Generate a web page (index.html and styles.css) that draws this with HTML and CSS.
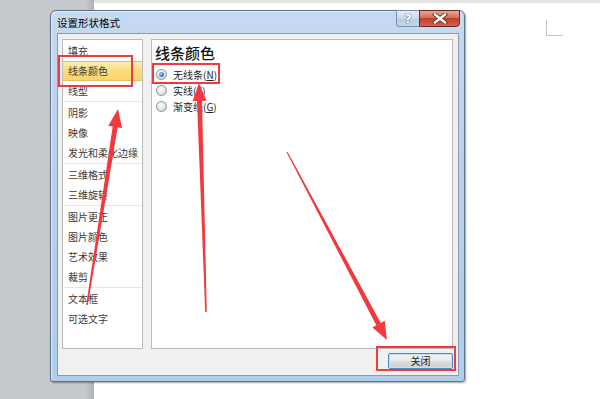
FILE: index.html
```html
<!DOCTYPE html>
<html lang="zh-CN">
<head>
    <meta charset="UTF-8">
    <title>设置形状格式</title>
    <link rel="stylesheet" href="styles.css">
</head>
<body>
    <div class="desk"></div>
    <div class="page">
        <div class="crop-mark"></div>
    </div>

    <div class="dialog">
        <div class="titlebar">
            <span class="title">设置形状格式</span>
            <div class="caption-buttons">
                <div class="btn-help">?</div>
                <div class="btn-close">
                    <svg width="16" height="11" viewBox="0 0 16 11">
                        <path d="M3 1.5 L13 9.5 M13 1.5 L3 9.5" stroke="#6e2a20" stroke-width="4.2" stroke-linecap="square"/>
                        <path d="M3 1.5 L13 9.5 M13 1.5 L3 9.5" stroke="#ffffff" stroke-width="2.4" stroke-linecap="square"/>
                    </svg>
                </div>
            </div>
        </div>

        <div class="client">
            <div class="panes">
                <ul class="nav">
                    <li>填充</li>
                    <li class="active">线条颜色</li>
                    <li>线型</li>
                    <li class="sep"></li>
                    <li>阴影</li>
                    <li>映像</li>
                    <li>发光和柔化边缘</li>
                    <li class="sep"></li>
                    <li>三维格式</li>
                    <li>三维旋转</li>
                    <li class="sep"></li>
                    <li>图片更正</li>
                    <li>图片颜色</li>
                    <li>艺术效果</li>
                    <li>裁剪</li>
                    <li class="sep"></li>
                    <li>文本框</li>
                    <li>可选文字</li>
                </ul>

                <div class="panel">
                    <h2>线条颜色</h2>
                    <label class="radio checked"><span class="dot"></span>无线条(<u>N</u>)</label>
                    <label class="radio"><span class="dot"></span>实线(<u>S</u>)</label>
                    <label class="radio"><span class="dot"></span>渐变线(<u>G</u>)</label>
                </div>
            </div>
            <div class="actions">
                <button class="close-btn">关闭</button>
            </div>
        </div>
    </div>

    <!-- red annotations drawn over the screenshot -->
    <svg class="marks" width="600" height="399" viewBox="0 0 600 399">
        <g fill="none" stroke="#f03a3e" stroke-width="2">
            <rect x="59" y="56" width="73" height="30"/>
            <rect x="153" y="64" width="66" height="19"/>
            <rect x="377" y="347" width="78" height="23"/>
        </g>
        <g fill="#f23a3d">
            <polygon points="118,109 122.1,127.9 117.7,127.2 87.8,305.1 86.2,304.9 112.7,126.4 108.3,125.7"/>
            <polygon points="199,83 206.5,100.8 202,100.9 206.8,312 205.2,312 197,101.1 192.6,101.2"/>
            <polygon points="387,340 384.7,320.8 380.8,322.9 287.5,151.7 286.5,152.3 376.3,325.3 372.4,327.4"/>
        </g>
    </svg>
</body>
</html>
```

FILE: styles.css
```css
body {
    margin: 0;
    width: 600px;
    height: 399px;
    overflow: hidden;
    position: relative;
    display: flex;
    background-color: #ffffff;
    font-family: "Noto Sans CJK SC", "Noto Sans", sans-serif;
    font-size: 10px;
    color: #333333;
}
.desk {
    width: 94px;
    background: linear-gradient(to right, #c5c8cc 86px, #aeb1b5 94px);
}
.page {
    flex: 1;
    border-top: 3px solid #e4e4e4;
    padding: 17px 0 0 452px;
}
.crop-mark {
    width: 16px;
    height: 15px;
    border-left: 1px solid #c4c4c4;
    border-bottom: 1px solid #c4c4c4;
}

.dialog {
    position: absolute;
    left: 50px;
    top: 10px;
    width: 415px;
    height: 372px;
    box-sizing: border-box;
    border: 1px solid #5f7189;
    border-radius: 6px 6px 3px 3px;
    padding: 0 5px 5px 6px;
    display: flex;
    flex-direction: column;
    background: linear-gradient(#c6daf0, #bad3ee 30%, #b0cdec 100%);
    box-shadow: inset 1px 1px 0 #dfeaf7, 1px 1px 2px rgba(0, 0, 0, 0.35);
}
.titlebar {
    height: 22px;
    display: flex;
    align-items: center;
    justify-content: space-between;
}
.title {
    color: #000000;
    font-size: 10.5px;
    line-height: 14px;
    margin-top: 1px;
}
.caption-buttons {
    align-self: flex-start;
    display: flex;
    margin-top: -1px;
    margin-right: -1px;
}
.btn-help {
    width: 22px;
    height: 15px;
    border: 1px solid #7a8fa8;
    border-right: none;
    border-radius: 0 0 0 4px;
    background: linear-gradient(#e4ecf5, #cbd9e9 50%, #b6c9de 51%, #c6d6e8);
    color: #ffffff;
    font-family: "DejaVu Sans", sans-serif;
    font-weight: bold;
    font-size: 13px;
    line-height: 15px;
    text-align: center;
    text-shadow: 0 0 1px #4c5a6c, 0 0 1px #4c5a6c;
}
.btn-close {
    width: 39px;
    height: 15px;
    border: 1px solid #6b2b24;
    border-radius: 0 0 4px 0;
    background: linear-gradient(#e8a595, #d66d5a 45%, #c23d2b 50%, #d1624f);
    display: flex;
    align-items: center;
    justify-content: center;
}

.client {
    flex: 1;
    border: 1px solid #8a9aaf;
    background-color: #f0f0f0;
    padding: 5px 5px 0 4px;
    display: flex;
    flex-direction: column;
}
.panes {
    height: 310px;
    display: flex;
    gap: 8px;
}
.nav {
    width: 79px;
    margin: 0;
    padding: 1px 0 0 0;
    list-style: none;
    background-color: #ffffff;
    border: 1px solid #bcbcbc;
}
.nav li {
    height: 20px;
    line-height: 20px;
    padding-left: 5px;
    white-space: nowrap;
    color: #3a3a3a;
}
.nav li.active {
    height: 18px;
    line-height: 18px;
    border-top: 1px solid #e3c162;
    border-bottom: 1px solid #e3c162;
    background: linear-gradient(#fdeeb5, #fbdc7c 50%, #fad470);
}
.nav li.sep {
    height: 1px;
    margin: 0 0 1px 0;
    padding: 0;
    background-color: #e6e6e6;
}
.panel {
    flex: 1;
    background-color: #ffffff;
    border: 1px solid #bcbcbc;
    padding: 3px 3px 0 3px;
}
.panel h2 {
    margin: 0 0 3px 0;
    font-size: 15px;
    line-height: 20px;
    font-weight: 500;
    color: #111111;
}
.radio {
    display: flex;
    align-items: center;
    height: 16px;
    color: #222222;
}
.radio u {
    text-underline-offset: 1px;
}
.dot {
    width: 9px;
    height: 9px;
    margin: 0 6px 0 1px;
    border: 1px solid #8c8f93;
    border-radius: 50%;
    background: radial-gradient(circle at 40% 35%, #ffffff, #dcdcdc 70%, #c8c8c8);
    display: flex;
    align-items: center;
    justify-content: center;
}
.radio.checked .dot::after {
    content: "";
    width: 5px;
    height: 5px;
    border-radius: 50%;
    background: radial-gradient(circle at 35% 35%, #8ed0f7, #2f7fc4 60%, #1b4f86);
}
.actions {
    display: flex;
    justify-content: flex-end;
    margin-top: 4px;
}
.close-btn {
    width: 65px;
    height: 16px;
    padding: 0;
    border: 1px solid #3d8fc8;
    border-radius: 2px;
    background: linear-gradient(#f3f3f3, #ebebeb 48%, #dcdcdc 52%, #cfcfcf);
    box-shadow: inset 0 0 0 1px #bfe3f7;
    font-family: "Noto Sans CJK SC", sans-serif;
    font-size: 10px;
    line-height: 12px;
    color: #222222;
}

.marks {
    position: absolute;
    left: 0;
    top: 0;
    pointer-events: none;
}
```
